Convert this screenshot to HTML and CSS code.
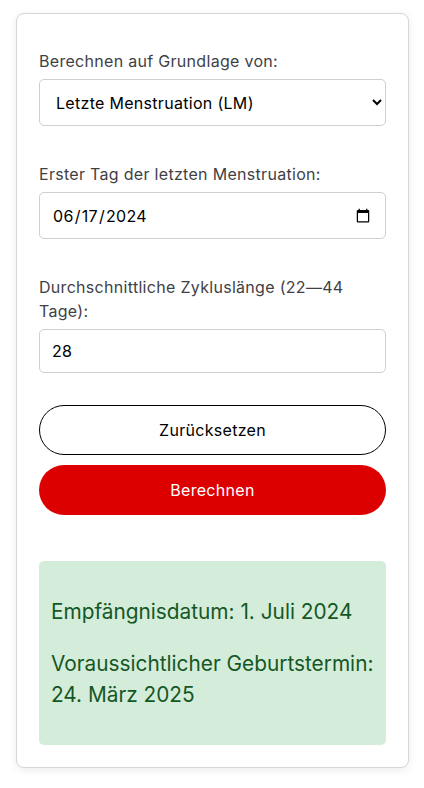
FILE: index.html
```html
<!DOCTYPE html>
<html lang="de">
<head>
<meta charset="utf-8">
<title>Geburtsterminrechner</title>
<link rel="stylesheet" href="styles.css">
</head>
<body>
<div class="card">
  <form class="calc">
    <div class="group">
      <label class="label" for="basis">Berechnen auf Grundlage von:</label>
      <select class="field field-select" id="basis">
        <option>Letzte Menstruation (LM)</option>
        <option>Empfängnisdatum</option>
      </select>
    </div>
    <div class="group">
      <label class="label" for="lmp">Erster Tag der letzten Menstruation:</label>
      <input class="field field-date" id="lmp" type="date" value="2024-06-17">
    </div>
    <div class="group">
      <label class="label" for="cycle">Durchschnittliche Zykluslänge (22—44 Tage):</label>
      <input class="field field-number" id="cycle" type="text" value="28">
    </div>
    <div class="buttons">
      <button type="button" class="btn btn-reset">Zurücksetzen</button>
      <button type="button" class="btn btn-calc">Berechnen</button>
    </div>
  </form>
  <div class="result">
    <p>Empfängnisdatum: 1. Juli 2024</p>
    <p>Voraussichtlicher Geburtstermin: 24. März 2025</p>
  </div>
</div>
</body>
</html>
```
FILE: styles.css
```css
* { box-sizing: border-box; }
html, body { background: #ffffff; }
body {
  margin: 0;
  padding: 13px 15px 20px 16px;
  font-family: "Inter", "Noto Sans", sans-serif;
  color: #444;
}
.card {
  background: #fff;
  border: 1px solid #d6d6d6;
  border-radius: 8px;
  box-shadow: 0 2px 8px rgba(0, 0, 0, 0.08);
  padding: 22px;
}
.calc { margin: 0; }
.group { margin-top: 36px; }
.group:first-child { margin-top: 13px; }
.label {
  display: block;
  font-size: 16px;
  line-height: 24px;
  letter-spacing: 0.3px;
  color: #3f3f46;
  margin-bottom: 6px;
}
.field {
  display: block;
  width: 100%;
  margin: 0;
  font-family: "Inter", "Noto Sans", sans-serif;
  font-size: 16px;
  letter-spacing: 0.3px;
  color: #000;
  background: #fff;
  border: 1px solid #cfcfcf;
  border-radius: 5px;
  padding: 0 12px;
}
.field-select { height: 47px; }
.field-date { height: 47px; }
.field-number { height: 44px; }
.buttons {
  margin-top: 32px;
  display: flex;
  flex-direction: column;
  gap: 10px;
}
.btn {
  height: 50px;
  border-radius: 25px;
  font-family: "Inter", "Noto Sans", sans-serif;
  font-size: 16px;
  font-weight: 400;
  letter-spacing: 0.3px;
  cursor: pointer;
}
.btn-reset {
  background: #fff;
  color: #000;
  border: 1px solid #000;
}
.btn-calc {
  background: #dd0000;
  color: #fff;
  border: none;
}
.result {
  margin-top: 46px;
  background: #d4edda;
  color: #155724;
  border-radius: 5px;
  padding: 14px 12px;
  font-size: 20.8px;
  line-height: 1.5;
}
.result p { margin: 20.8px 0; }
```
